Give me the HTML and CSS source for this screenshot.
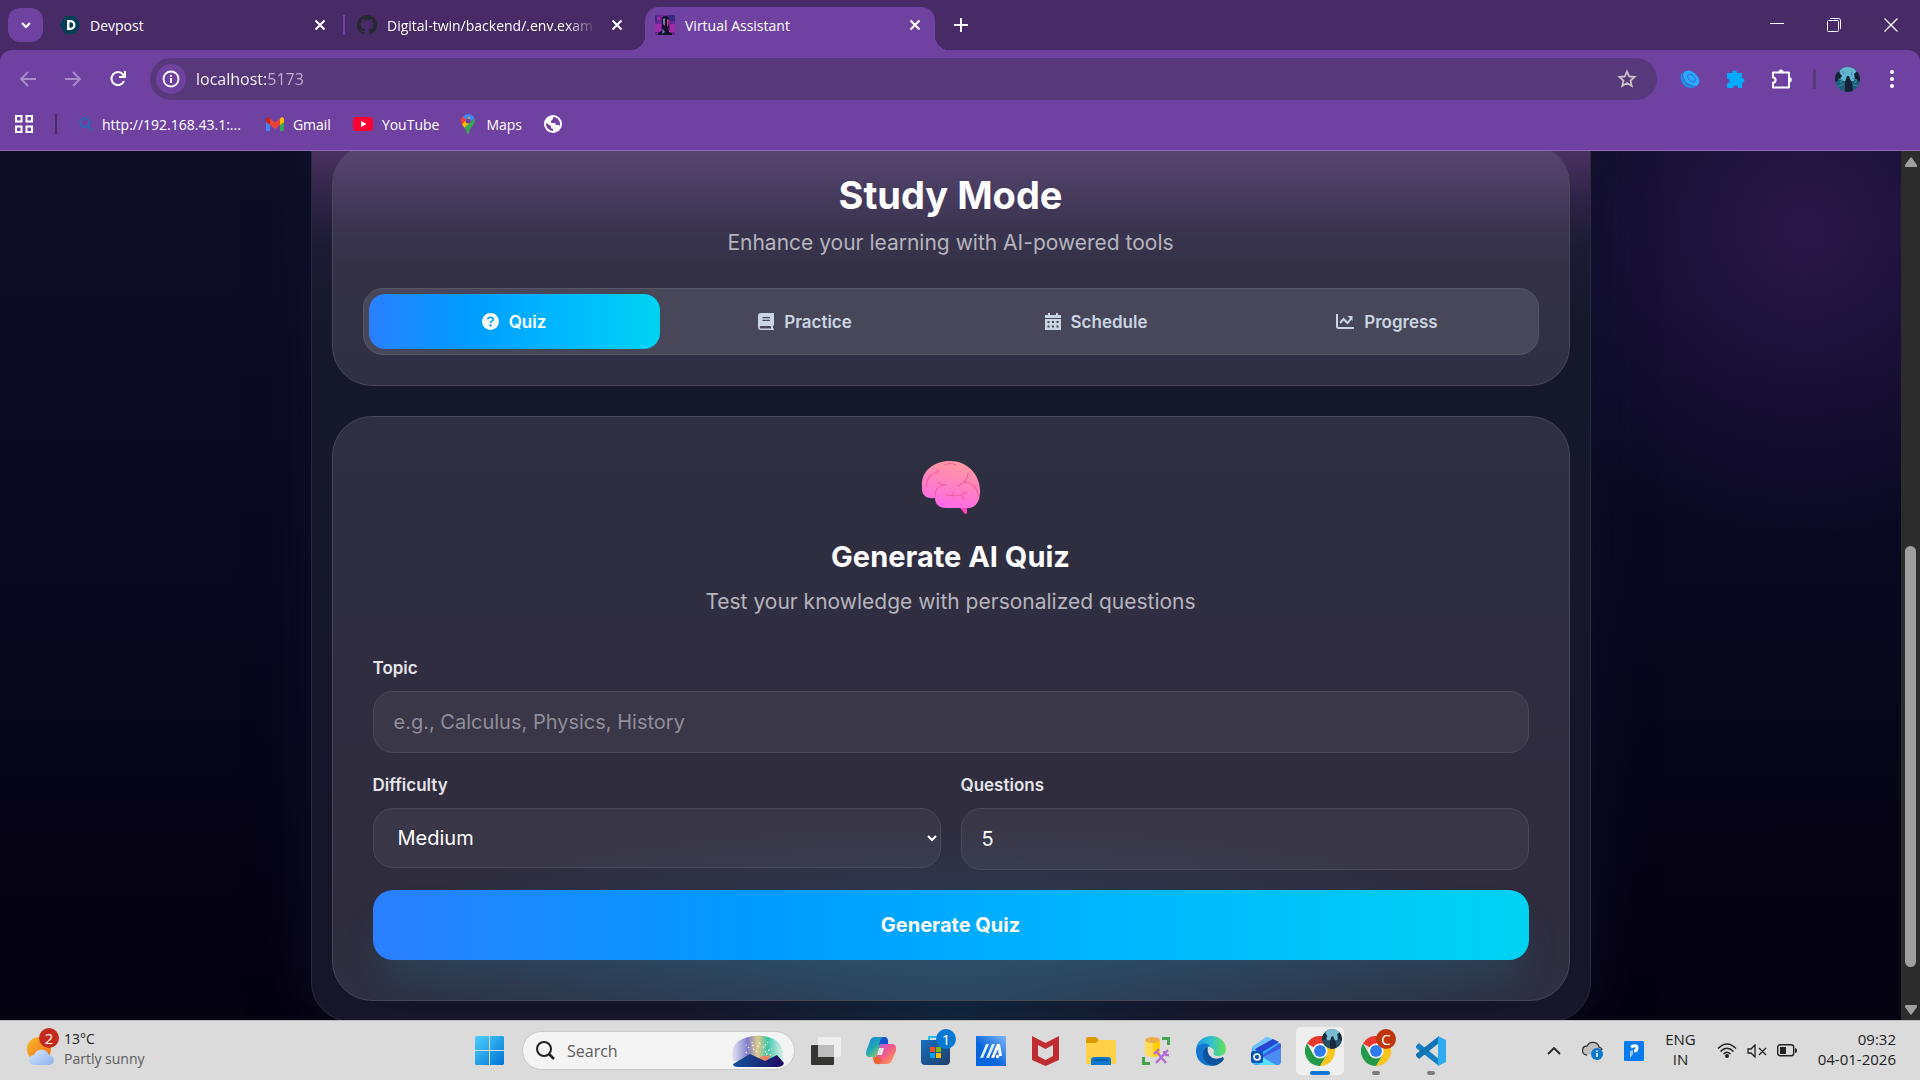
FILE: index.html
```html
<!DOCTYPE html>
<html lang="en">
<head>
  <meta charset="UTF-8">
  <meta name="viewport" content="width=device-width, initial-scale=1.0">
  <title>Virtual Assistant</title>
  <link rel="stylesheet" href="styles.css">
</head>
<body>
  <!-- Browser window -->
  <header class="browser">
    <div class="tab-strip">
      <button class="tab-search" aria-label="Search tabs">
        <svg width="12" height="12" viewBox="0 0 12 12" fill="none" stroke="currentColor" stroke-width="2"><path d="M2 4l4 4 4-4"/></svg>
      </button>
      <div class="tab tab-first">
        <svg width="20" height="20" viewBox="0 0 20 20"><path d="M5 1h10l5 9-5 9H5l-5-9z" fill="#003e54"/><path d="M7 5h3.500a5 5 0 0 1 0 10H7zM9.500 7.300v5.400h1a2.700 2.700 0 0 0 0-5.400z" fill="#fff" fill-rule="evenodd"/></svg>
        <span class="tab-title">Devpost</span>
        <button class="tab-close" aria-label="Close tab"><svg width="12" height="12" viewBox="0 0 12 12" stroke="currentColor" stroke-width="2"><path d="M1.500 1.500l9 9M10.500 1.500l-9 9"/></svg></button>
      </div>
      <div class="tab tab-second">
        <svg width="20" height="20" viewBox="0 0 16 16" fill="#24292f"><path d="M8 0C3.580 0 0 3.580 0 8c0 3.540 2.290 6.530 5.470 7.590.4.070.55-.17.55-.38v-1.490c-2.010.37-2.530-.49-2.690-.94-.09-.23-.48-.94-.82-1.130-.28-.15-.68-.52-.01-.53.63-.01 1.080.58 1.230.82.72 1.210 1.870.87 2.330.66.07-.52.28-.87.51-1.070-1.780-.2-3.640-.89-3.640-3.950 0-.87.31-1.590.82-2.150-.08-.2-.36-1.020.08-2.120 0 0 .67-.21 2.200.82a7.600 7.600 0 0 1 4 0c1.530-1.040 2.200-.82 2.200-.82.44 1.100.16 1.920.08 2.120.51.56.82 1.270.82 2.150 0 3.070-1.870 3.750-3.650 3.950.29.25.54.73.54 1.480v2.200c0 .21.15.46.55.38A8 8 0 0 0 16 8c0-4.420-3.580-8-8-8z"/></svg>
        <span class="tab-title tab-title-fade">Digital-twin/backend/.env.exam</span>
        <button class="tab-close" aria-label="Close tab"><svg width="12" height="12" viewBox="0 0 12 12" stroke="currentColor" stroke-width="2"><path d="M1.500 1.500l9 9M10.500 1.500l-9 9"/></svg></button>
      </div>
      <div class="tab tab-active">
        <svg width="20" height="20" viewBox="0 0 20 20"><path fill="#6b2591" d="M0 0h20v20H0z"/><path fill="#a02aa8" d="M0 9h6v8H0zM2 2h3v3H2zM15 9h5v8h-5z"/><path fill="#362b80" d="M14 0h6v6h-6zM0 0h2v7H0z"/><path fill="#14112c" d="M7 4c0-4 7-4 7 0v8l-1 3 4 3v2H3v-2l5-3-1-3z"/><path fill="#6c83ad" d="M8 4l2-1v8l-2-2zM8 14l2 3-3 2z"/><path fill="#e0357c" d="M12 4l2 1-1 7-1-1zM14 15l3 3-3-1z"/></svg>
        <span class="tab-title">Virtual Assistant</span>
        <button class="tab-close" aria-label="Close tab"><svg width="12" height="12" viewBox="0 0 12 12" stroke="currentColor" stroke-width="2"><path d="M1.500 1.500l9 9M10.500 1.500l-9 9"/></svg></button>
      </div>
      <button class="new-tab" aria-label="New tab"><svg width="14" height="14" viewBox="0 0 14 14" stroke="currentColor" stroke-width="2"><path d="M7 0v14M0 7h14"/></svg></button>
      <div class="window-controls">
        <button aria-label="Minimize"><svg width="14" height="14" viewBox="0 0 14 14" stroke="currentColor"><path d="M0 5.500h14"/></svg></button>
        <button aria-label="Restore"><svg width="14" height="14" viewBox="0 0 14 14" fill="none" stroke="currentColor"><rect x=".5" y="2.500" width="11" height="11" rx="1"/><path d="M3 .5h8.500a2 2 0 0 1 2 2V11"/></svg></button>
        <button aria-label="Close"><svg width="14" height="14" viewBox="0 0 14 14" stroke="currentColor" stroke-width="1.300"><path d="M.5.5l13 13M13.500.5l-13 13"/></svg></button>
      </div>
    </div>

    <div class="toolbar">
      <button class="nav-button nav-disabled" aria-label="Back"><svg width="16" height="16" viewBox="0 0 16 16" fill="none" stroke="currentColor" stroke-width="1.800"><path d="M16 8H1.500M8 1L1 8l7 7"/></svg></button>
      <button class="nav-button nav-disabled" aria-label="Forward"><svg width="16" height="16" viewBox="0 0 16 16" fill="none" stroke="currentColor" stroke-width="1.800"><path d="M0 8h14.500M8 1l7 7-7 7"/></svg></button>
      <button class="nav-button" aria-label="Reload"><svg width="16" height="16" viewBox="0 0 16 16" fill="none" stroke="currentColor" stroke-width="2"><path d="M14 10A6.500 6.500 0 1 1 13 3.500L15 6"/><path d="M15 0v6H9"/></svg></button>
      <div class="omnibox">
        <button class="site-info" aria-label="Site information"><svg width="18" height="18" viewBox="0 0 18 18" fill="none" stroke="currentColor" stroke-width="1.800"><circle cx="9" cy="9" r="7.500"/><path d="M9 8v5M9 5v1.800"/></svg></button>
        <input class="address" type="text" value="localhost:5173" aria-label="Address">
        <button class="bookmark-star" aria-label="Bookmark this tab"><svg width="20" height="20" viewBox="0 0 20 20" fill="none" stroke="currentColor" stroke-width="1.800"><path d="M10 2.500l2.200 5 5.400.5-4.100 3.600 1.200 5.300L10 14.100l-4.700 2.800 1.200-5.300L2.400 8l5.400-.5z"/></svg></button>
      </div>
      <div class="extensions">
        <button aria-label="Browser extension"><svg width="20" height="20" viewBox="0 0 20 20"><path d="M1.500 4C-1 10 2 19 11 19q4 0 6-2z" fill="#1b8fe8"/><ellipse cx="11" cy="9.500" rx="9.500" ry="6.500" transform="rotate(42 11 9.500)" fill="#29a9ff"/><path d="M2.500 5c0 6 5 12 13.500 12.500" fill="none" stroke="#5c50b0"/><ellipse cx="11.500" cy="9" rx="4.500" ry="2.800" transform="rotate(42 11.500 9)" fill="none" stroke="#2f78d6" stroke-width="1.200"/></svg></button>
        <button aria-label="Extension"><svg width="20" height="20" viewBox="0 0 20 20" fill="#00aaff"><path d="M1 4h5a2.500 2.500 0 0 1 5 0h5v5a2.500 2.500 0 0 1 0 5v5h-4a2.500 2.500 0 0 0-5 0H1v-4.500a2.500 2.500 0 0 0 0-5z"/></svg></button>
        <button aria-label="Extensions"><svg width="22" height="22" viewBox="0 0 22 22"><path d="M2 4.500h16v15H2v-4.800a2.600 2.600 0 0 0 0-5.200z" fill="none" stroke="#fff" stroke-width="2" stroke-linejoin="round"/><path d="M7.500 4a2.500 2.500 0 0 1 5 0zM18 9a2.800 2.800 0 0 1 0 5.600z" fill="#fff"/></svg></button>
      </div>
      <span class="toolbar-divider"></span>
      <button class="profile" aria-label="Profile">
        <svg width="25" height="25" viewBox="0 0 25 25"><defs><clipPath id="face"><circle cx="12.500" cy="12.500" r="12.500"/></clipPath></defs><g clip-path="url(#face)"><path d="M0 0h25v25H0z" fill="#1e5f78"/><path d="M5 3l4-3h9l4 5-3 9H7L4 9z" fill="#62b5cf"/><path d="M0 15l4-2 3-4-3-4-4 1zM25 15l-5-3-1-5 3-3 3 1zM10 25l0-10 1-3 1-3 2 0 1 3 2 4 1 9z" fill="#132234"/><path d="M3 12l5 1-3 3M17 11l5 2-3 3M2 20l7-3M18 18l6 1M7 4l2 3M17 5l-1 3" fill="none" stroke="#3c8aa3"/></g></svg>
      </button>
      <button class="menu" aria-label="Menu"><svg width="6" height="20" viewBox="0 0 6 20" fill="currentColor"><circle cx="3" cy="3" r="2"/><circle cx="3" cy="10" r="2"/><circle cx="3" cy="17" r="2"/></svg></button>
    </div>

    <nav class="bookmarks">
      <button class="apps" aria-label="Apps"><svg width="18" height="18" viewBox="0 0 18 18" fill="none" stroke="currentColor" stroke-width="2"><path d="M1 1h5.500v5.500H1zM11.500 1H17v5.500h-5.500zM1 11.500h5.500V17H1zM11.500 11.500H17V17h-5.500z"/></svg></button>
      <span class="bookmarks-divider"></span>
      <a class="bookmark bookmark-router" href="#"><svg width="14" height="14" viewBox="0 0 14 14" fill="none" stroke="#1673bd" stroke-width="1.600"><circle cx="5.500" cy="5.500" r="4.500"/><path d="M9 9l4 4.500"/></svg>http://192.168.43.1:...</a>
      <a class="bookmark" href="#"><svg width="18" height="14" viewBox="0 0 18 14"><path d="M0 3h4v11H1.500A1.500 1.500 0 0 1 0 12.500z" fill="#4285f4"/><path d="M14 3h4v9.500a1.500 1.500 0 0 1-1.500 1.500H14z" fill="#34a853"/><path d="M14 1.500c2-2.300 4-1.400 4 1V5l-4 3z" fill="#fbbc04"/><path d="M4 1.500C2-.8 0 .1 0 2.500V5l4 3z" fill="#c5221f"/><path d="M4 1.500l5 4 5-4V8l-5 4-5-4z" fill="#ea4335"/></svg>Gmail</a>
      <a class="bookmark" href="#"><svg width="20" height="14" viewBox="0 0 20 14"><rect width="20" height="14" rx="3.500" fill="#ff0033"/><path d="M8 4l5.500 3L8 10z" fill="#fff"/></svg>YouTube</a>
      <a class="bookmark bookmark-maps" href="#"><svg width="14" height="20" viewBox="0 0 14 20"><path d="M7 0a7 7 0 0 1 6.500 4.500L4 12 1.500 10.500A7 7 0 0 1 7 0z" fill="#4285f4"/><path d="M1.600 2.500l4 3.500-4.300 5A7 7 0 0 1 1.600 2.500z" fill="#ea4335"/><path d="M1 10.400l7.500-8.200L9 9l-5.500 5z" fill="#fbbc04"/><path d="M13.500 4.500c2 5.500-4.700 7.500-5.500 15q-1 1.200-2 0C5.500 17 4.500 15 3.500 13.500z" fill="#34a853"/><circle cx="7" cy="7" r="2.500" fill="#6f42a1"/></svg>Maps</a>
      <a class="bookmark" href="#" aria-label="Website"><svg width="18" height="18" viewBox="0 0 18 18"><circle cx="9" cy="9" r="9" fill="#fff"/><path d="M2 8l5 3v2l2 1v2a7 7 0 0 1-7-8zM9 2v2L7 6v2h4l1 2h3l1 1c1-4-2-9-7-9z" fill="#6f42a1"/></svg></a>
    </nav>
  </header>

  <!-- Page, scrolled to its end -->
  <div class="viewport">
    <main class="page">
      <div class="shell">
        <section class="card study">
          <h1>Study Mode</h1>
          <p class="subtitle">Enhance your learning with AI-powered tools</p>
          <div class="modes" role="tablist">
            <button class="mode mode-active" role="tab" aria-selected="true">
              <svg width="17" height="17" viewBox="0 0 17 17"><circle cx="8.500" cy="8.500" r="8.500" fill="#fff"/><path d="M5.800 6.300C6 3.600 11.300 3.700 11.200 6.600c0 1.700-2.700 1.600-2.700 3.400" fill="none" stroke="#0aa5ff" stroke-width="1.700"/><circle cx="8.500" cy="12.500" r="1.200" fill="#0aa5ff"/></svg>
              Quiz
            </button>
            <button class="mode" role="tab">
              <svg width="16" height="17" viewBox="0 0 16 17"><path d="M3 0h13v12l-1 1v2.500h1V17H3a3 3 0 0 1-3-3V3a3 3 0 0 1 3-3zM3 13a1 1 0 0 0 0 2.500h10V13zM4.500 4v1.300H12V4zm0 2.800v1.300H12V6.800z" fill="currentColor" fill-rule="evenodd"/></svg>
              Practice
            </button>
            <button class="mode" role="tab">
              <svg width="16" height="17" viewBox="0 0 16 17"><path d="M3 0h2v2h6V0h2v2h3v3H0V2h3zM0 6h16v11H0zM2.500 8v2h2V8zm4.500 0v2h2V8zm4.500 0v2h2V8zM2.500 12.500v2h2v-2zm4.500 0v2h2v-2zm4.500 0v2h2v-2z" fill="currentColor" fill-rule="evenodd"/></svg>
              Schedule
            </button>
            <button class="mode" role="tab">
              <svg width="18" height="15" viewBox="0 0 18 15" fill="none" stroke="currentColor" stroke-width="2"><path d="M1 0v12.500a1.500 1.500 0 0 0 1.500 1.500H18M4 9l3.500-4 4 4 4-5"/><path d="M11.500 2h5v5z" fill="currentColor" stroke="none"/></svg>
              Progress
            </button>
          </div>
        </section>

        <section class="card quiz">
          <svg class="brain" width="60" height="60" viewBox="0 0 60 60">
            <defs>
              <linearGradient id="brainFill" x1=".7" y1="0" x2=".4" y2="1"><stop offset="0" stop-color="#ff9b9c"/><stop offset=".4" stop-color="#ff87b8"/><stop offset="1" stop-color="#ff69ea"/></linearGradient>
            </defs>
            <path d="M37 48h9v8q-1 2-3 0z" fill="#ff45bd"/>
            <path d="M14 41C5 42 0 38 1 29 0 14 13 4 29 4c17 0 30 13 30 30 0 10-4 17-12 17H25c-7 0-11-4-11-10z" fill="url(#brainFill)"/>
            <g fill="none" stroke="#ee5f9f" stroke-width="1.200" stroke-linecap="round" stroke-linejoin="round"><path d="M24 8q5-3 11 0M5 30c0-8 6-15 13-15l-2-2M14 40c0-8 3-12 11-12l-8-2M47 16q0 6-4 9c9 1 13 5 14 14M44 24l-7 5M25 38c7 1 14 2 21-3M31 38l2-3M41 39l2 4"/></g>
          </svg>
          <h2>Generate AI Quiz</h2>
          <p class="subtitle">Test your knowledge with personalized questions</p>

          <form class="quiz-form">
            <div class="field">
              <label for="topic">Topic</label>
              <input type="text" id="topic" placeholder="e.g., Calculus, Physics, History">
            </div>
            <div class="field-row">
              <div class="field">
                <label for="difficulty">Difficulty</label>
                <select id="difficulty">
                  <option>Easy</option>
                  <option selected>Medium</option>
                  <option>Hard</option>
                </select>
              </div>
              <div class="field">
                <label for="questions">Questions</label>
                <input type="number" id="questions" value="5">
              </div>
            </div>
            <button type="button" class="generate">Generate Quiz</button>
          </form>
        </section>
      </div>
    </main>
    <div class="scrollbar">
      <svg width="12" height="10" viewBox="0 0 12 10" fill="#9f9f9f"><path d="M5 1q1-1.500 2 0l5 7q.5 2-1 2H1q-1.500 0-1-2z"/></svg>
      <div class="scroll-track"><div class="scroll-thumb"></div></div>
      <svg width="12" height="10" viewBox="0 0 12 10" fill="#9f9f9f"><path d="M5 9q1 1.500 2 0l5-7q.5-2-1-2H1Q-.5 0 0 2z"/></svg>
    </div>
  </div>

  <!-- Taskbar -->
  <footer class="taskbar">
    <button class="weather">
      <span class="weather-icon">
        <svg width="28" height="28" viewBox="0 0 28 28"><defs><linearGradient id="sun" x1="0" y1="0" x2="1" y2="1"><stop offset="0" stop-color="#f8bd28"/><stop offset="1" stop-color="#ed6818"/></linearGradient><linearGradient id="cloud" x2="1" y2="1"><stop offset="0" stop-color="#d9e8fb"/><stop offset="1" stop-color="#8cb1ed"/></linearGradient></defs><circle cx="12" cy="12" r="12" fill="url(#sun)"/><path d="M7 28a5 5 0 0 1 0-10 8 8 0 0 1 15 0 5 5 0 0 1 0 10z" fill="url(#cloud)"/></svg>
        <span class="badge badge-red">2</span>
      </span>
      <span class="weather-text"><span>13°C</span><span class="muted">Partly sunny</span></span>
    </button>

    <div class="apps-bar">
      <button class="app" aria-label="Start"><svg width="29" height="29" viewBox="0 0 29 29"><defs><linearGradient id="win" x2="1" y2="1"><stop offset="0" stop-color="#4cd0ff"/><stop offset="1" stop-color="#0073d4"/></linearGradient></defs><path d="M1 0h13v14H0V1zM15 0h13l1 1v13H15zM0 15h14v14H1l-1-1zM15 15h14v13l-1 1H15z" fill="url(#win)"/></svg></button>
      <div class="search">
        <svg width="19" height="19" viewBox="0 0 19 19" fill="none" stroke="#222" stroke-width="2"><circle cx="8" cy="8" r="7"/><path d="M13 13l5 5" stroke-width="2.500"/></svg>
        <input type="text" placeholder="Search" aria-label="Search">
        <svg width="54" height="32" viewBox="0 0 54 32"><defs><linearGradient id="sky"><stop offset="0" stop-color="#9a93d8" stop-opacity=".2"/><stop offset=".3" stop-color="#7c7dcd"/><stop offset=".5" stop-color="#e0c98c"/><stop offset=".7" stop-color="#38c5ad"/><stop offset="1" stop-color="#8adbc6" stop-opacity=".3"/></linearGradient><linearGradient id="hill" x2="1"><stop stop-color="#10559a"/><stop offset="1" stop-color="#210a63"/></linearGradient></defs><path d="M2 26Q-2 8 14 3q14-5 26 0 14 5 12 23z" fill="url(#sky)"/><path d="M28 22l12-2-6 8z" fill="#ef8265"/><path d="M2 29l17-10 15 7 12-6 7 8q-1 4-7 4H7q-5 0-5-3z" fill="url(#hill)"/><path d="M16 18l-3-2M18 13l-3-3M22 11l-1-4M27 12l2-5M32 13l5-6M34 17l7-3M35 19l6 1M26 17l-4-3" stroke="#fff7cf" stroke-width="1.500" stroke-dasharray="1.500 2"/></svg>
      </div>
      <button class="app" aria-label="Task view"><svg width="30" height="28" viewBox="0 0 30 28"><rect y="8" width="23" height="20" rx="1" fill="#353633"/><rect x="7" width="23" height="20" rx="1" fill="#eee"/><path d="M7 8h16v12H8q-1 0-1-1z" fill="#bdbdbd"/></svg></button>
      <button class="app" aria-label="Copilot"><svg width="30" height="28" viewBox="0 0 30 28"><defs><linearGradient id="cop1" y2="1"><stop stop-color="#1775dc"/><stop offset=".45" stop-color="#22acb2"/><stop offset="1" stop-color="#f5d71d"/></linearGradient><linearGradient id="cop2" y2="1"><stop stop-color="#b658ec"/><stop offset=".5" stop-color="#f45b86"/><stop offset="1" stop-color="#ffae42"/></linearGradient></defs><path d="M9 0h10q3 0 2 3l-4 13q-1 4-5 4H4q-6 0-3-8L4 4q1-4 5-4z" fill="url(#cop1)"/><path d="M18 0q5 0 4 7h-7q-2 0-3 4l2-7q1-4 4-4z" fill="#1751cf"/><path d="M21 27H11q-3 0-2-4l4-12q1-4 5-4h8q5 0 4 7l-4 9q-1 4-5 4z" fill="url(#cop2)"/><path d="M7 20h5q4 0 3 4-1 4-4 3-4 0-4-7z" fill="#f06231"/><path d="M13 11h5l-2 7h-5z" fill="#e5e5e5"/></svg></button>
      <button class="app app-badged" aria-label="Microsoft Store"><svg width="29" height="29" viewBox="0 0 29 29"><defs><linearGradient id="store" y2="1"><stop stop-color="#1470bf"/><stop offset="1" stop-color="#233d67"/></linearGradient></defs><path d="M8 5V1h13v4" fill="none" stroke="#25bdea" stroke-width="2"/><path d="M0 4h29v21q0 4-4 4H4q-4 0-4-4z" fill="url(#store)"/><path d="M9 11h5v5H9z" fill="#f15022"/><path d="M15 11h5v5h-5z" fill="#7fba00"/><path d="M9 17h5v5H9z" fill="#00a4ef"/><path d="M15 17h5v5h-5z" fill="#ffb900"/></svg><span class="badge badge-blue">1</span></button>
      <button class="app" aria-label="MyASUS"><svg width="30" height="30" viewBox="0 0 30 30"><defs><linearGradient id="asus" x1=".4" y1=".6" x2="1" y2="0"><stop stop-color="#0465dd"/><stop offset="1" stop-color="#7fb6f7"/></linearGradient></defs><path d="M0 0h30v30H0z" fill="url(#asus)"/><path d="M4 22L10 8h3L7 22zM10 22l6-14h3l-6 14z" fill="#dcecff"/><path d="M15 22l6-14h3l2 12h-3l-1-7-4 9z" fill="#fff"/><circle cx="21.500" cy="20.500" r="1.700" fill="#fff"/></svg></button>
      <button class="app" aria-label="McAfee"><svg width="27" height="30" viewBox="0 0 27 30"><path d="M0 0l13.500 7L27 0v24l-13.500 6L0 24zM6 9v11l7.500 4 7.500-4V9l-7.500 4z" fill="#bf2c32" fill-rule="evenodd"/></svg></button>
      <button class="app" aria-label="File Explorer"><svg width="30" height="28" viewBox="0 0 30 28"><path d="M0 2q0-2 2-2h8l3 3h14q2 0 2 2v5H0z" fill="#d99a00"/><path d="M0 6h10l3-3h15q2 0 2 2v22H0z" fill="#ffd048"/><path d="M5 28v-5q0-3 3-3h14q3 0 3 3v5z" fill="#1078c9"/><path d="M9 23h12" stroke="#0755a0" stroke-width="1.500" stroke-linecap="round"/></svg></button>
      <button class="app" aria-label="Database tools"><svg width="28" height="28" viewBox="0 0 28 28"><path d="M3 3v14c0 4 15 4 15 0V3z" fill="#ffdb57"/><path d="M11 4h7v13q-2 2-7 3z" fill="#ffd000"/><ellipse cx="10.500" cy="3" rx="7.500" ry="3" fill="#edab4f"/><path d="M20 1.500h6.500V8M1.500 20v6.500H8" fill="none" stroke="#46a24c" stroke-width="3"/><path d="M14 14l10 12M26 13L14 26M12 17l5-5M22 14q0 5 5 4" fill="none" stroke="#b16bd1" stroke-width="2.300"/></svg></button>
      <button class="app" aria-label="Microsoft Edge"><svg width="30" height="30" viewBox="0 0 30 30"><defs><linearGradient id="edge1"><stop stop-color="#1b96e5"/><stop offset=".5" stop-color="#31c0cf"/><stop offset="1" stop-color="#68e153"/></linearGradient></defs><path d="M0 13C1 5 8 0 15 0c10 0 15 7 15 13 0 5-4 7-8 7-4 0-5-2-4-4 1-5-9-8-18-3z" fill="url(#edge1)"/><path d="M0 15C0 8 8 6 14 9c-8 4-6 15 5 20C10 32 0 26 0 15z" fill="#1375cf"/><path d="M12 11c-2 8 5 15 15 10l1 2c-3 5-9 8-14 6C4 24 6 12 12 11z" fill="#0d529d"/></svg></button>
      <button class="app" aria-label="Outlook"><svg width="30" height="28" viewBox="0 0 30 28"><path d="M1 10L16 0l14 7v17q0 4-4 4H5q-4 0-4-4z" fill="#31b5fa"/><path d="M1 10L14 1q2-2 5 0l4 2L4 15z" fill="#6ec4fa"/><path d="M4 12L22 2l6 3L8 17z" fill="#2844d2"/><path d="M10 19L29 6l1 2v6L14 22z" fill="#3a5be8"/><path d="M12 20l18-9v13q0 4-4 4H9z" fill="#4b8cf2"/><path d="M11 20l14 8H8z" fill="#57e2fc"/><rect y="14" width="12" height="12" rx="2" fill="#0754bc"/><circle cx="6" cy="20" r="3" fill="none" stroke="#fff" stroke-width="1.700"/></svg></button>
      <button class="app app-active app-badged" aria-label="Google Chrome">
        <svg width="30" height="30" viewBox="0 0 30 30"><path d="M15 15L2 7.500A15 15 0 0 1 28 7.500H15z" fill="#e7392e"/><path d="M15 15l13-7.500A15 15 0 0 1 15 30l6.500-11.300z" fill="#fcc31a"/><path d="M15 15l6.500 3.700L15 30A15 15 0 0 1 2 7.500l6.500 11.200z" fill="#229a48"/><circle cx="15" cy="15" r="7.500" fill="#fff"/><circle cx="15" cy="15" r="6" fill="#327bed"/></svg>
        <span class="badge badge-photo"><svg width="20" height="20" viewBox="0 0 25 25"><g clip-path="url(#face)"><path d="M0 0h25v25H0z" fill="#2a5069"/><path d="M5 3l4-3h9l4 5-3 9H7L4 9z" fill="#78bdd4"/><path d="M0 15l4-2 3-4-3-4-4 1zM25 15l-5-3-1-5 3-3 3 1zM10 25l0-10 1-3 1-3 2 0 1 3 2 4 1 9z" fill="#192c3d"/></g></svg></span>
        <span class="running running-wide"></span>
      </button>
      <button class="app app-badged" aria-label="Google Chrome, second profile">
        <svg width="30" height="30" viewBox="0 0 30 30"><path d="M15 15L2 7.500A15 15 0 0 1 28 7.500H15z" fill="#e7392e"/><path d="M15 15l13-7.500A15 15 0 0 1 15 30l6.500-11.300z" fill="#fcc31a"/><path d="M15 15l6.500 3.700L15 30A15 15 0 0 1 2 7.500l6.500 11.200z" fill="#229a48"/><circle cx="15" cy="15" r="7.500" fill="#fff"/><circle cx="15" cy="15" r="6" fill="#327bed"/></svg>
        <span class="badge badge-letter">C</span>
        <span class="running"></span>
      </button>
      <button class="app" aria-label="Visual Studio Code"><svg width="30" height="30" viewBox="0 0 30 30"><path d="M0 10l3-3 20 16v7L0 12z" fill="#1680c5"/><path d="M0 20l3 3L23 7V0L0 18z" fill="#1172b6"/><path d="M22 0l8 4v22l-8 4z" fill="#2eaaf3"/></svg><span class="running"></span></button>
    </div>

    <div class="tray">
      <button aria-label="Show hidden icons"><svg width="14" height="8" viewBox="0 0 14 8" fill="none" stroke="#222" stroke-width="1.800"><path d="M1 7l6-6 6 6"/></svg></button>
      <button aria-label="OneDrive"><svg width="21" height="19" viewBox="0 0 21 19"><path d="M5 14C-1 14-1 5 5 5c3-6 11-4 12 1q3 1 3 3" fill="#bebebe" stroke="#333" stroke-width="1.300"/><circle cx="15" cy="13" r="6" fill="#0878d1"/><path d="M15 12v4M15 9.500V11" stroke="#fff" stroke-width="1.600"/></svg></button>
      <button aria-label="Pen app"><svg width="20" height="20" viewBox="0 0 20 20"><rect width="20" height="20" rx="1" fill="#087af0"/><path d="M7 6q6-3 6 1 0 3-3 3" fill="none" stroke="#fff" stroke-width="3"/><path d="M6 10l3-1v4l-3 4z" fill="#9cccfb"/></svg></button>
      <button class="language"><span>ENG</span><span>IN</span></button>
      <button class="status" aria-label="Network, sound and battery">
        <svg width="20" height="15" viewBox="0 0 20 15" fill="none" stroke="#222" stroke-width="1.500"><path d="M1 5.500Q10-3.500 19 5.500M3.500 8.500Q10 2 16.500 8.500M6.500 11Q10 7.500 13.500 11"/><circle cx="10" cy="13" r="1.200" fill="#222"/></svg>
        <svg width="20" height="14" viewBox="0 0 20 14" fill="none" stroke="#222" stroke-width="1.300"><path d="M1 5h3l4-4v12L4 9H1zM12 4l7 7M19 4l-7 7"/></svg>
        <svg width="20" height="13" viewBox="0 0 20 13"><rect x=".7" y=".7" width="16" height="11" rx="2.500" fill="none" stroke="#222" stroke-width="1.400"/><path d="M3 3h6v7H3zM18 4q2 0 2 2.500T18 9z" fill="#222"/></svg>
      </button>
      <button class="clock"><span>09:32</span><span>04-01-2026</span></button>
    </div>
  </footer>
</body>
</html>
```

FILE: styles.css
```css
* {
  box-sizing: border-box;
}
body {
  margin: 0;
  height: 100vh;
  display: flex;
  flex-direction: column;
  overflow: hidden;
  font-family: "Open Sans", "Noto Sans", sans-serif;
  font-size: 14px;
  color: #fff;
}
button {
  display: flex;
  align-items: center;
  justify-content: center;
  padding: 0;
  border: none;
  background: none;
  color: inherit;
  font: inherit;
  cursor: pointer;
}
svg {
  display: block;
  flex-shrink: 0;
}

/* Browser */
.browser {
  background: #472a66;
  border-bottom: 1px solid #9467bd;
}
.tab-strip {
  display: flex;
  align-items: center;
  height: 50px;
  padding-left: 8px;
}
.tab-search {
  width: 35px;
  height: 34px;
  border-radius: 12px;
  background: #6f42a1;
}
.tab {
  display: flex;
  align-items: center;
  gap: 10px;
  height: 36px;
}
.tab-title {
  flex: 1;
  white-space: nowrap;
}
.tab-title-fade {
  mask-image: linear-gradient(90deg, #000 85%, transparent);
}
.tab-close {
  width: 20px;
  height: 20px;
}
.tab-first {
  width: 302px;
  padding: 0 13px 0 17px;
  border-right: 2px solid #6f42a1;
  height: 20px;
}
.tab-second {
  width: 300px;
  padding: 0 18px 0 12px;
}
.tab-active {
  position: relative;
  width: 290px;
  height: 43px;
  align-self: flex-end;
  padding: 0 10px 7px;
  border-radius: 14px 14px 0 0;
  background: #6f42a1;
}
.tab-active::before,
.tab-active::after {
  content: "";
  position: absolute;
  bottom: 0;
  width: 14px;
  height: 14px;
}
.tab-active::before {
  right: 100%;
  background: radial-gradient(circle at 0 0, transparent 14px, #6f42a1 14px);
}
.tab-active::after {
  left: 100%;
  background: radial-gradient(circle at 100% 0, transparent 14px, #6f42a1 14px);
}
.new-tab {
  width: 52px;
  height: 36px;
}
.window-controls {
  display: flex;
  align-items: center;
  margin: 0 1px 0 auto;
}
.window-controls button {
  width: 57px;
  height: 48px;
}
.toolbar {
  display: flex;
  align-items: center;
  height: 58px;
  padding: 0 13px 0 5px;
  border-radius: 12px 12px 0 0;
  background: #6f42a1;
}
.nav-button {
  width: 45px;
  height: 40px;
}
.nav-disabled {
  color: #a98dc9;
}
.omnibox {
  display: flex;
  align-items: center;
  flex: 1;
  height: 42px;
  margin-left: 10px;
  padding: 0 20px 0 6px;
  border-radius: 21px;
  background: #57387b;
}
.site-info {
  width: 30px;
  height: 30px;
  border-radius: 50%;
  background: #6f42a1;
}
.address {
  flex: 1;
  margin-left: 10px;
  padding: 0;
  border: none;
  outline: none;
  font: inherit;
  font-size: 16px;
  color: transparent;
  background: linear-gradient(90deg, #fff 71px, #bfb0cf 71px);
  background-clip: text;
}
.bookmark-star {
  color: #cdc3c9;
}
.extensions {
  display: flex;
  margin-left: 10px;
}
.extensions button {
  width: 46px;
  height: 40px;
}
.toolbar-divider {
  width: 3px;
  height: 20px;
  margin: 0 19px 0 8px;
  border-radius: 2px;
  background: #57387b;
}
.menu {
  width: 30px;
  height: 40px;
  margin-left: 17px;
}
.bookmarks {
  display: flex;
  align-items: center;
  gap: 22px;
  height: 42px;
  padding: 0 15px 10px;
  background: #6f42a1;
}
.bookmarks-divider {
  width: 2px;
  height: 20px;
  background: #472a66;
}
.bookmark {
  display: flex;
  align-items: center;
  gap: 9px;
  color: #fff;
  text-decoration: none;
}
.bookmark-router {
  margin-right: 3px;
}
.bookmark-maps {
  gap: 11px;
}

/* Page */
.viewport {
  flex: 1;
  min-height: 0;
  display: flex;
  background: #050212;
}
.page {
  flex: 1;
  min-width: 0;
  display: flex;
  flex-direction: column;
  justify-content: flex-end;
  align-items: center;
  overflow: hidden;
  font-family: Inter, sans-serif;
  background:
    radial-gradient(circle at 95% 9%, #2a1849 0, rgba(35, 20, 70, 0.6) 140px, transparent 320px),
    linear-gradient(180deg, #0d0e25 0, #090820 45%, #04020f 100%);
}
.shell {
  flex-shrink: 0;
  width: 100%;
  max-width: 1280px;
  margin-bottom: -2px;
  padding: 80px 20px 20px;
  border: 1px solid #2b2a3c;
  border-radius: 40px;
  background:
    radial-gradient(ellipse at 50% 98%, rgba(10, 60, 85, 0.4) 0, transparent 30%),
    linear-gradient(180deg, #49315f 90px, #302448 130px, #1c1b34 180px, #15182b 260px, #161529 100%);
  box-shadow: 0 0 60px rgba(18, 18, 50, 0.6);
}
.card {
  border: 1px solid #494758;
  border-radius: 40px;
  text-align: center;
}
.study {
  padding: 28px 30px 30px;
  background: linear-gradient(180deg, #57446e 8px, #4a3d62 40px, #3b3550 80px, #343147 120px, #302f43 100%);
}
.quiz {
  margin-top: 30px;
  padding: 40px;
  background:
    radial-gradient(ellipse 55% 30% at 50% 100%, rgba(45, 100, 135, 0.5) 0, transparent 100%),
    linear-gradient(180deg, #2e2f42, #302d40 40%, #2e2c3c);
}
h1,
h2 {
  margin: 0;
  font-weight: 700;
}
h1 {
  font-size: 38px;
  line-height: 45px;
}
h2 {
  margin-top: 20px;
  font-size: 29px;
  line-height: 40px;
}
.subtitle {
  margin: 10px 0 0;
  font-size: 21px;
  line-height: 30px;
  color: #b6b4bd;
}
.modes {
  display: grid;
  grid-template-columns: repeat(4, 1fr);
  margin-top: 30px;
  padding: 5px;
  border: 1px solid #5a5867;
  border-radius: 20px;
  background: #484659;
}
.mode {
  gap: 10px;
  height: 55px;
  border-radius: 16px;
  font-size: 17px;
  font-weight: 600;
  color: #cad5e2;
}
.mode-active {
  color: #fff;
  background: linear-gradient(90deg, #2b7fff, #009bff 33%, #00b8ff 66%, #00d3f2);
}
.brain {
  margin: 0 auto;
}
.quiz-form {
  display: flex;
  flex-direction: column;
  gap: 20px;
  margin-top: 39px;
  text-align: left;
}
.field-row {
  display: grid;
  grid-template-columns: 1fr 1fr;
  align-items: start;
  gap: 20px;
}
.field label {
  display: block;
  margin-bottom: 10px;
  font-size: 17px;
  font-weight: 600;
  line-height: 25px;
  color: #e5e4e9;
}
.field input,
.field select {
  display: block;
  width: 100%;
  height: 62px;
  padding: 0 20px;
  border: 1px solid #4b4959;
  border-radius: 20px;
  outline: none;
  font-family: inherit;
  font-size: 20px;
  color: #fff;
  background: rgba(255, 255, 255, 0.05);
}
.field select {
  height: 60px;
}
.field option {
  color: #222;
}
.field input::placeholder {
  color: #908e99;
}
.generate {
  height: 70px;
  border-radius: 20px;
  font-size: 20px;
  font-weight: 700;
  background: linear-gradient(90deg, #2b7fff, #009bff 33%, #00b8ff 66%, #00d3f2);
  box-shadow: 0 24px 40px -12px rgba(40, 140, 180, 0.22);
}

.scrollbar {
  display: flex;
  flex-direction: column;
  align-items: center;
  width: 19px;
  padding: 6px 0 5px;
  background: #2c2c2c;
}
.scroll-track {
  flex: 1;
  display: flex;
  flex-direction: column;
  justify-content: flex-end;
  padding: 5px 0 38px;
}
.scroll-thumb {
  width: 11px;
  height: 53%;
  border-radius: 6px;
  background: #9f9f9f;
}

/* Taskbar */
.taskbar {
  display: grid;
  grid-template-columns: 1fr auto 1fr;
  align-items: center;
  height: 60px;
  border-top: 1px solid #bdbbbf;
  font-size: 15px;
  line-height: 20px;
  color: #222;
  background: #dbdbdb;
}
.weather {
  justify-self: start;
  gap: 9px;
  margin-left: 27px;
}
.weather-icon,
.app-badged {
  position: relative;
}
.weather-text {
  display: flex;
  flex-direction: column;
  padding-bottom: 4px;
  font-size: 14px;
  text-align: left;
}
.muted {
  color: #5c5c5c;
}
.badge {
  position: absolute;
  top: 2px;
  right: 7px;
  width: 20px;
  height: 20px;
  border-radius: 50%;
  text-align: center;
  color: #fff;
}
.badge-red {
  top: -9px;
  right: -4px;
  background: #c42b1c;
}
.badge-blue {
  background: #0878d4;
}
.badge-letter {
  background: #bf360c;
}
.badge-photo {
  right: 2px;
}
.apps-bar {
  display: flex;
  align-items: center;
}
.app {
  position: relative;
  width: 55px;
  height: 48px;
}
.app-active {
  width: 48px;
  margin: 0 4px 0 3px;
  border-radius: 5px;
  background: #efefef;
}
.running {
  position: absolute;
  bottom: 0;
  left: 50%;
  width: 8px;
  height: 4px;
  margin-left: -4px;
  border-radius: 2px;
  background: #7d7d7d;
}
.running-wide {
  width: 20px;
  margin-left: -10px;
  background: #0878d4;
}
.search {
  display: flex;
  align-items: center;
  gap: 12px;
  width: 273px;
  height: 39px;
  margin: 0 3px 0 5px;
  padding: 0 9px 0 13px;
  border: 1px solid #c9c9c9;
  border-radius: 20px;
  background: #f4f4f4;
}
.search input {
  flex: 1;
  min-width: 0;
  padding: 0;
  border: none;
  outline: none;
  font: inherit;
  font-size: 16px;
  background: none;
}
.search input::placeholder {
  color: #5c5c5c;
}
.tray {
  display: flex;
  align-items: center;
  justify-self: end;
  gap: 21px;
  margin-right: 24px;
}
.language,
.clock {
  flex-direction: column;
  padding-bottom: 4px;
}
.clock {
  align-items: flex-end;
}
.status {
  gap: 10px;
}
```
